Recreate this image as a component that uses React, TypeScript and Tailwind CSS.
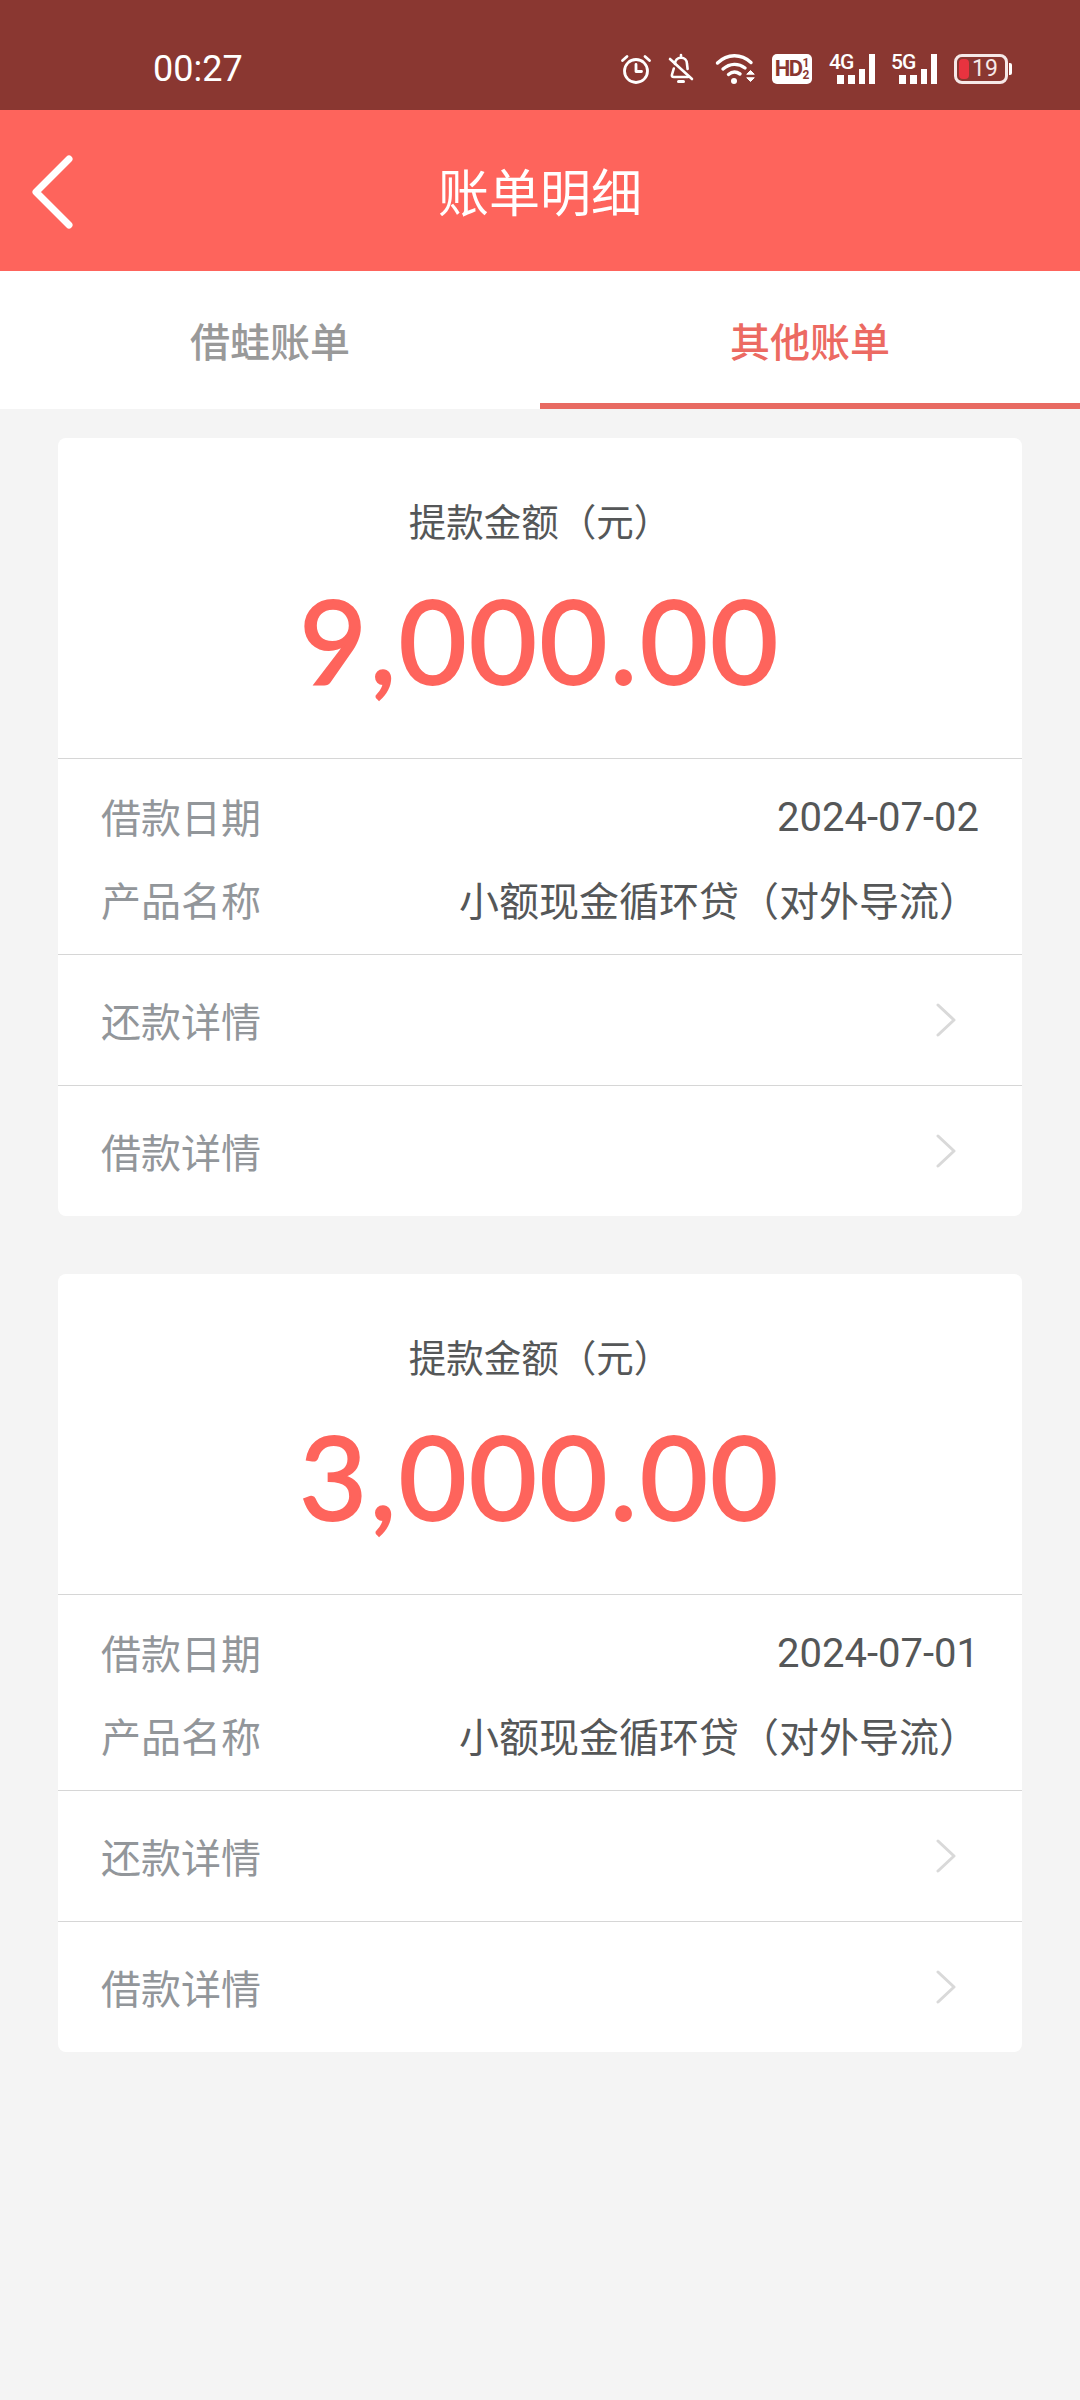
const cjk = { fontFamily: '"Noto Sans CJK SC", "Noto Sans", sans-serif' };

function Alarm() {
  return (
    <svg width="32" height="32" viewBox="0 0 32 32" fill="none" stroke="#fff" strokeLinecap="round" strokeLinejoin="round">
      <circle cx="16" cy="18" r="11.5" strokeWidth="2.8" />
      <path d="M16 11.5V18.5H21.5" strokeWidth="2.8" />
      <path d="M2.5 7.5L7 3.5M29.5 7.5L25 3.5" strokeWidth="2.8" />
    </svg>
  );
}
function Bell() {
  return (
    <svg width="28" height="32" viewBox="0 0 28 32" fill="none" stroke="#fff" strokeWidth="2.6" strokeLinecap="round" strokeLinejoin="round">
      <path d="M14 2V4.5M8 11C8 7 10.5 4.8 14 4.8S20 7 20 11L20.6 16M6.8 15.5L5 21.5C4.5 23.2 5.3 24 6.8 24H21" />
      <path d="M3 6L25 26" />
      <path d="M11.5 28.5H16.5" strokeWidth="3" />
    </svg>
  );
}
function Wifi() {
  return (
    <svg width="42" height="32" viewBox="0 0 42 32" fill="none" stroke="#fff" strokeWidth="3.4" strokeLinecap="round">
      <path d="M2.5 10C12.5 0.5 26 0.5 36 9.5" />
      <path d="M8 16C15 10 23.5 10 30 15" />
      <path d="M13.5 21.5C17 18.5 21.5 18.5 25 21" />
      <circle cx="19" cy="28" r="3" fill="#fff" stroke="none" />
      <path d="M32 21L35.5 17.5L39 21Z" fill="#fff" strokeWidth="1" />
      <path d="M32 25L35.5 28.5L39 25Z" fill="#fff" strokeWidth="1" />
    </svg>
  );
}
function HD() {
  return (
    <div className="w-[40px] h-[30px] rounded-[5px] bg-white flex items-center justify-center overflow-hidden">
      <span className="text-[#8a3731] text-[22px] font-bold leading-none tracking-[-1.5px] [font-family:'Roboto',sans-serif]">HD</span>
      <span className="flex flex-col items-center ml-[1px] text-[#8a3731] text-[12px] font-bold leading-[12px] [font-family:'Roboto',sans-serif]">
        <span>1</span>
        <span>2</span>
      </span>
    </div>
  );
}
function Signal({ label }: { label: string }) {
  return (
    <div className="relative w-[47px] h-[30px] flex items-end justify-end gap-[4px]">
      <span className="absolute left-[1px] top-[-3px] text-white text-[21px] font-medium leading-[22px] tracking-[-1px] [font-family:'Roboto',sans-serif]">{label}</span>
      <span className="w-[7px] h-[9px] bg-white" />
      <span className="w-[7px] h-[9px] bg-white" />
      <span className="w-[6px] h-[15px] bg-white" />
      <span className="w-[6px] h-[30px] bg-white" />
    </div>
  );
}
function Battery() {
  return (
    <div className="flex items-center">
      <div className="relative w-[54px] h-[30px] rounded-[8px] border-[3px] border-[#f6e9e8] flex items-center">
        <span className="absolute left-[2px] top-[2px] bottom-[2px] w-[10px] rounded-[4px] bg-[#e8333f]" />
        <span className="ml-[15px] text-[#f6e9e8] text-[23px] leading-none [font-family:'Roboto',sans-serif]">19</span>
      </div>
      <span className="ml-[1px] w-[3px] h-[12px] rounded-r-[2px] bg-white" />
    </div>
  );
}
function Chevron() {
  return (
    <svg width="20" height="34" viewBox="0 0 20 34" fill="none" stroke="#d9d9d9" strokeWidth="3" strokeLinecap="round" strokeLinejoin="round">
      <path d="M2 2L18 17L2 32" />
    </svg>
  );
}
function LinkRow({ label }: { label: string }) {
  return (
    <div className="h-[131px] flex items-center justify-between border-t border-[#d6d6d6] pl-[43px] pr-[66px]">
      <span className="text-[40px] text-[#92969a]">{label}</span>
      <Chevron />
    </div>
  );
}
function BillCard({ amount, date }: { amount: string; date: string }) {
  return (
    <div className="bg-white rounded-[8px] overflow-hidden">
      <div className="h-[320px] flex flex-col items-center">
        <div className="mt-[54px] h-[56px] leading-[56px] text-[37.5px] text-[#555758]">提款金额（元）</div>
        <div className="mt-[21px] text-[#fe645c] text-[117px] leading-[140px] tracking-[2.5px] [-webkit-text-stroke:2px_#fe645c] [font-family:'Lato',sans-serif]">{amount}</div>
      </div>
      <div className="border-t border-[#d6d6d6] h-[196px] px-[43px] pt-[28px]">
        <div className="flex justify-between items-center h-[58px]">
          <span className="text-[40px] text-[#92969a]">借款日期</span>
          <span className="text-[40px] text-[#555758] pt-[3px] [font-family:'Roboto',sans-serif]">{date}</span>
        </div>
        <div className="flex justify-between items-center h-[58px] mt-[25px]">
          <span className="text-[40px] text-[#92969a]">产品名称</span>
          <span className="text-[40px] text-[#555758]">小额现金循环贷（对外导流）</span>
        </div>
      </div>
      <LinkRow label="还款详情" />
      <LinkRow label="借款详情" />
    </div>
  );
}

export default function App() {
  return (
    <div className="w-[1080px] h-[2400px] bg-[#f4f4f4] overflow-hidden" style={cjk}>
      <div className="h-[110px] bg-[#8a3731] flex items-center pl-[153px] pr-[68px] pt-[27px]">
        <span className="text-white text-[36px] leading-none [font-family:'Roboto',sans-serif]">00:27</span>
        <div className="ml-auto flex items-center gap-[15px]">
          <Alarm />
          <Bell />
          <div className="ml-[5px]"><Wifi /></div>
          <HD />
          <div className="ml-[1px]"><Signal label="4G" /></div>
          <Signal label="5G" />
          <div className="ml-[2px]"><Battery /></div>
        </div>
      </div>
      <div className="relative h-[161px] bg-[#fe645c] flex items-center justify-center">
        <svg className="absolute left-[32px] top-[45px]" width="42" height="74" viewBox="0 0 42 74" fill="none" stroke="#fff" strokeWidth="7" strokeLinecap="round" strokeLinejoin="round">
          <path d="M37 4L4 37L37 70" />
        </svg>
        <span className="text-white text-[51px]">账单明细</span>
      </div>
      <div className="h-[138px] bg-white flex">
        <div className="flex-1 flex items-center justify-center text-[40px] font-medium text-[#999999]">借蛙账单</div>
        <div className="flex-1 flex items-center justify-center text-[40px] font-medium text-[#ec6a62] border-b-[6px] border-[#e86a62] pt-[6px]">其他账单</div>
      </div>
      <div className="px-[58px] pt-[29px] flex flex-col gap-[58px]">
        <BillCard amount="9,000.00" date="2024-07-02" />
        <BillCard amount="3,000.00" date="2024-07-01" />
      </div>
    </div>
  );
}
